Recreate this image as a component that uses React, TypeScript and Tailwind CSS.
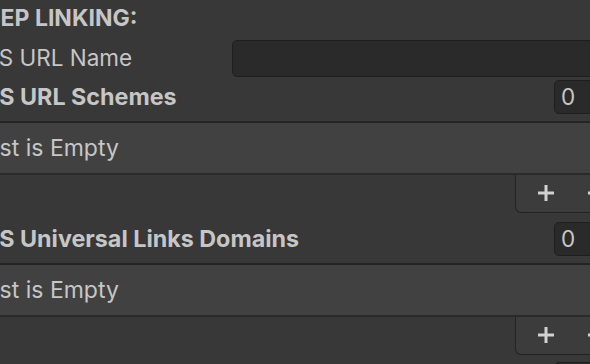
import React from "react";

function ListBlock() {
  return (
    <div className="flex flex-col">
      <div className="h-[54px] bg-[#414141] border-t-2 border-b-2 border-t-[#242424] border-b-[#2a2a2a] flex items-center pl-[6px]">
        <span className="ml-[-25px] text-[23px] whitespace-nowrap">List is Empty</span>
      </div>
      <div className="flex h-[38px]">
        <div className="w-[515px] shrink-0" />
        <div className="relative flex-1 bg-[#3c3c3c] border-l-[1.5px] border-b-[1.5px] border-[#232323] rounded-bl-[6px]">
          <svg className="absolute left-[22px] top-[10px]" width="16" height="16" viewBox="0 0 16 16">
            <rect x="0" y="6.5" width="16" height="3" fill="#d2d2d2" />
            <rect x="6.5" y="0" width="3" height="16" fill="#d2d2d2" />
          </svg>
          <svg className="absolute left-[72px] top-[10px]" width="16" height="16" viewBox="0 0 16 16">
            <rect x="0" y="6.5" width="16" height="3" fill="#d2d2d2" />
          </svg>
        </div>
      </div>
    </div>
  );
}

export default function App() {
  return (
    <div
      className="w-[590px] h-[364px] bg-[#383838] overflow-hidden text-[22.5px] leading-none text-[#c6c6c6]"
      style={{ fontFamily: "Inter, 'Noto Sans', sans-serif" }}
    >
      <div className="flex flex-col">
        <div className="h-[37px] flex items-center font-bold text-[23px]">
          <span className="ml-[-30px] whitespace-nowrap">DEEP LINKING:</span>
        </div>
        <div className="mt-[3px] h-[37px] flex items-center">
          <span className="ml-[-24px] w-[256px] shrink-0 whitespace-nowrap">iOS URL Name</span>
          <div className="h-[37px] flex-1 mr-[-20px] bg-[#2a2a2a] border border-[#1f1f1f] rounded-[5px]" />
        </div>
        <div className="mt-[3px] h-[34px] flex items-center">
          <span className="ml-[-25px] font-bold text-[23.3px] w-[579px] shrink-0 whitespace-nowrap">iOS URL Schemes</span>
          <div className="h-[34px] flex-1 mr-[-20px] bg-[#2a2a2a] border border-[#1f1f1f] rounded-[5px] flex items-center pl-[6px]">
            0
          </div>
        </div>
        <div className="mt-[7px]">
          <ListBlock />
        </div>
        <div className="mt-[9px] h-[34px] flex items-center">
          <span className="ml-[-25px] font-bold text-[23.3px] w-[579px] shrink-0 whitespace-nowrap">iOS Universal Links Domains</span>
          <div className="h-[34px] flex-1 mr-[-20px] bg-[#2a2a2a] border border-[#1f1f1f] rounded-[5px] flex items-center pl-[6px]">
            0
          </div>
        </div>
        <div className="mt-[7px]">
          <ListBlock />
        </div>
        <div className="mt-[7px] h-[34px] flex items-center">
          <span className="ml-[-25px] w-[579px] shrink-0"></span>
          <div className="h-[34px] flex-1 mr-[-20px] bg-[#2a2a2a] border border-[#1f1f1f] rounded-[5px]" />
        </div>
      </div>
    </div>
  );
}
